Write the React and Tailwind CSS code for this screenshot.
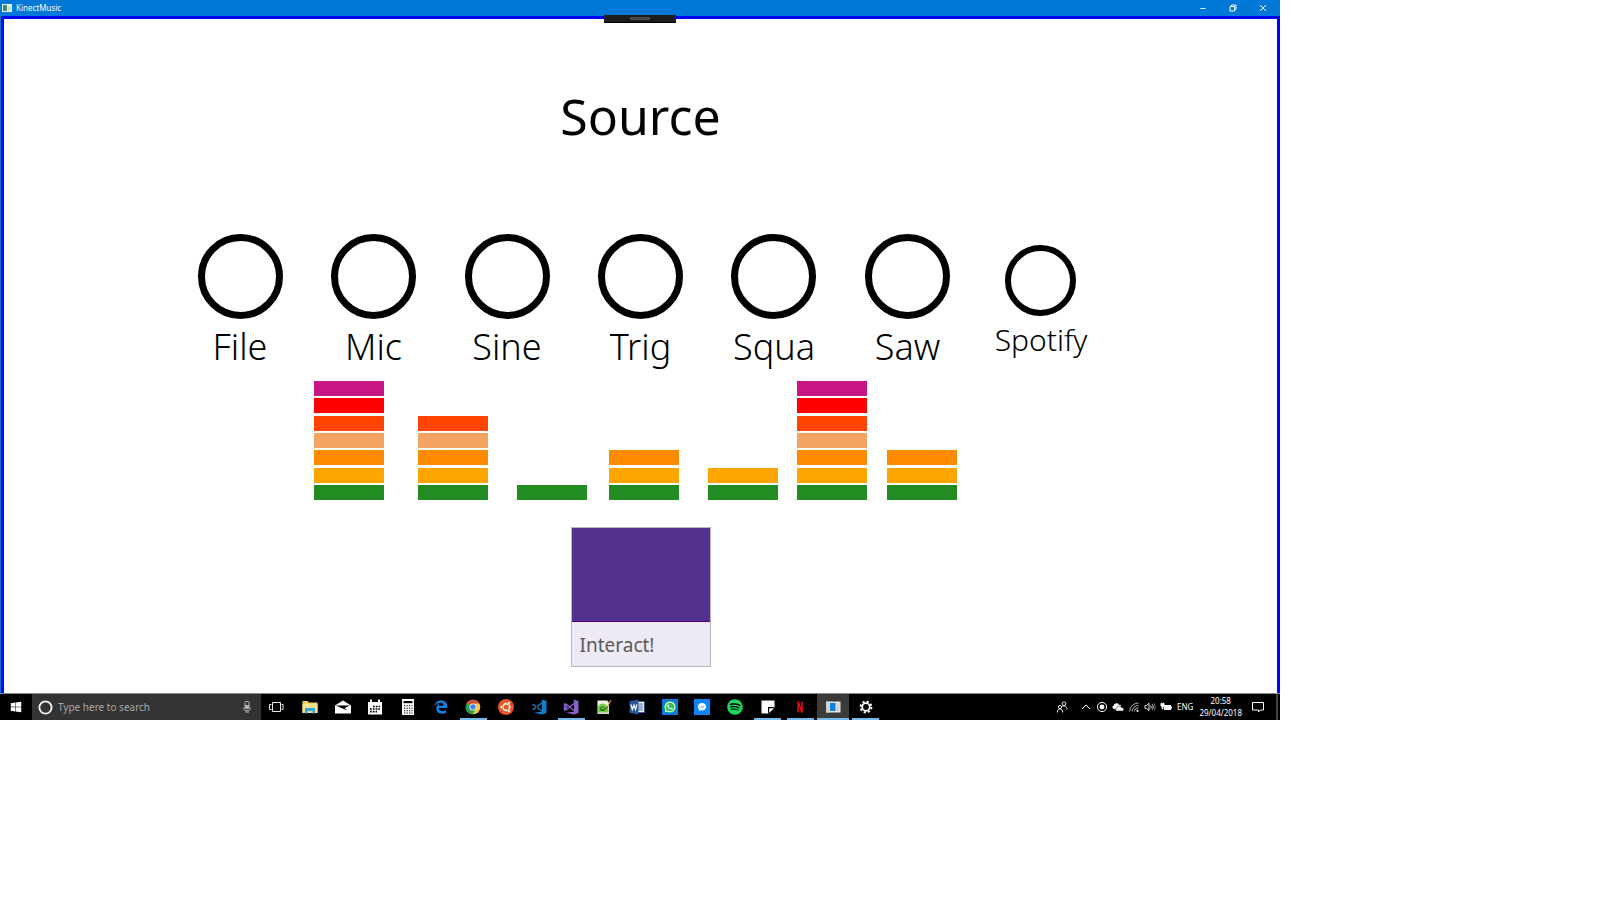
import React from "react";
import { FaWindows, FaEdgeLegacy, FaSpotify, FaWhatsapp } from "react-icons/fa6";

const SOURCES = ["File", "Mic", "Sine", "Trig", "Squa", "Saw"];

const LEVEL_COLORS = [
  "bg-[#c71585]",
  "bg-[#ff0000]",
  "bg-[#ff4500]",
  "bg-[#f4a460]",
  "bg-[#ff8c00]",
  "bg-[#ffa500]",
  "bg-[#228b22]",
];

const METERS = [
  { level: 7, gap: "" },
  { level: 5, gap: "ml-[34px]" },
  { level: 1, gap: "ml-[29px]" },
  { level: 3, gap: "ml-[22px]" },
  { level: 2, gap: "ml-[29px]" },
  { level: 7, gap: "ml-[19px]" },
  { level: 3, gap: "ml-[20px]" },
];

function Icon({ size = "size-4", children, box = "0 0 16 16" }) {
  return (
    <svg viewBox={box} className={`${size} shrink-0`} fill="none" aria-hidden="true">
      {children}
    </svg>
  );
}

const TaskViewIcon = () => (
  <Icon>
    <path d="M3.500 3.500h8v9h-8zM2.500 5.500h-2v5h2M12.500 5.500h1.500v5h-1.500" stroke="#e8e8e8" />
  </Icon>
);

const ExplorerIcon = () => (
  <Icon>
    <path d="M.5 2h5l1.500 1.500h8.500V14H.5z" fill="#f3cf63" />
    <path d="M.5 5h15v9H.5z" fill="#fbe08c" />
    <path d="M3 14.500V9h10v5.500h-2.500V12h-5v2.500z" fill="#2ca7e0" />
  </Icon>
);

const MailIcon = () => (
  <Icon>
    <path d="M0 6.500 8 1.500l8 5V14.500H0z" fill="#fff" />
    <path d="M1 6.500h14L9.500 9l3 2.500L7 9.200z" fill="#000" />
  </Icon>
);

const CalendarIcon = () => (
  <Icon>
    <path d="M1 3h2V.5h2V3h6V.5h2V3h2v12.500H1z" fill="#fff" />
    <path
      d="M6 7.500h7M3 10h10M3 12.700h7"
      stroke="#000"
      strokeWidth="1.700"
      strokeDasharray="1.800 1"
    />
  </Icon>
);

const CalculatorIcon = () => (
  <Icon>
    <path d="M2 0h12v16H2z" fill="#fff" />
    <path d="M3.500 2h9v2.200h-9z" fill="#000" />
    <path
      d="M4 6.800h8.500M4 9.300h8.500M4 11.700h8.500M4 14h8.500"
      stroke="#000"
      strokeWidth="1.100"
      strokeDasharray="1.300 1.200"
    />
  </Icon>
);

const ChromeIcon = () => (
  <Icon>
    <circle cx="8" cy="8" r="7.300" fill="#fcc934" />
    <path d="M8 8 1.700 4.300A7.300 7.300 0 0 1 14.300 4.400H8z" fill="#dd4b3e" />
    <path d="M1.700 4.300A7.300 7.300 0 0 0 7.600 15.300L11 9.800 8 8z" fill="#2a9d4e" />
    <circle cx="8" cy="8" r="3.600" fill="#fff" />
    <circle cx="8" cy="8" r="2.800" fill="#4285f4" />
  </Icon>
);

const UbuntuIcon = () => (
  <Icon>
    <circle cx="8" cy="8" r="8" fill="#e95420" />
    <circle cx="8.300" cy="8" r="3.400" stroke="#fff" strokeWidth="1.700" />
    <circle cx="3.600" cy="8" r="1.500" fill="#fff" stroke="#e95420" strokeWidth=".6" />
    <circle cx="10.800" cy="3.900" r="1.500" fill="#fff" stroke="#e95420" strokeWidth=".6" />
    <circle cx="10.800" cy="12.100" r="1.500" fill="#fff" stroke="#e95420" strokeWidth=".6" />
  </Icon>
);

const VsCodeIcon = () => (
  <Icon>
    <path d="M10.500.5 15.500 2v12l-5 1.500L3 13.500l8-.8V3.500z" fill="#0f7fcc" />
    <path d="m1 5.500 1.500-.8L11 11.500V13zM1 10.500l1.500.8L11 4.800V3z" fill="#0f7fcc" />
  </Icon>
);

const VisualStudioIcon = () => (
  <Icon>
    <path d="M10.500.5 15.500 2v12l-5 1.500L3 13.500l8-.8V3.500z" fill="#8a62c8" />
    <path
      d="M1.500 5.500v5l2.300-2.500zM1.500 5.500 3 5l8 6.500M1.500 10.500 3 11l8-6.500"
      stroke="#8a62c8"
      strokeWidth="1.400"
    />
  </Icon>
);

const NotepadIcon = () => (
  <Icon>
    <path d="M1.500 1.500h9.500l2 2v11.500H1.500z" fill="#eef2e6" />
    <path d="M2 7.500C4 3.500 9 3.500 11 7l1.500 3v3.500H2z" fill="#7ccb3f" />
    <path d="M3.500 10.500C4 6 9 6 10 10.500c-1.500 2-5 2-6.500 0z" fill="#2c7a1e" />
    <path d="M5 9.500c1-1.500 2.500-1.500 3.500 0z" fill="#c9efb0" />
    <path d="M2 14h10.500" stroke="#b5c7a6" />
    <path d="M15 1 11 8.500" stroke="#d6983b" strokeWidth="1.300" />
    <path d="m11.200 8-.7 1.800" stroke="#332211" />
  </Icon>
);

const WordIcon = () => (
  <Icon>
    <path d="M7.500 2.500h7.800v11H7.500z" fill="#fff" stroke="#2b579a" strokeWidth=".8" />
    <path d="M9 5h5M9 7h5M9 9h5M9 11h5" stroke="#2b579a" strokeWidth=".9" />
    <path d="M.5 2.200 9.500.6v14.800L.5 13.800z" fill="#2b579a" />
    <path d="m2 5.500 1.300 5L5 6l1.500 4.500L8 5.300" stroke="#fff" strokeWidth="1.200" />
  </Icon>
);

const WhatsAppIcon = () => (
  <span className="flex size-4 items-center justify-center bg-[#0a7bdc]">
    <span className="flex size-3 items-center justify-center rounded-full bg-[#2fc351]">
      <FaWhatsapp className="size-3 text-white" />
    </span>
  </span>
);

const MessengerIcon = () => (
  <Icon>
    <path d="M0 0h16v16H0z" fill="#0a84ff" />
    <path
      d="M8 4C5.600 4 3.900 5.600 3.900 7.700c0 1.100.5 2 1.300 2.700v1.700l1.500-.8c.4.100.8.100 1.300.100 2.400 0 4.100-1.600 4.100-3.700S10.400 4 8 4z"
      fill="#fff"
    />
    <path d="m5.700 8.800 1.700-1.700 1.300 1.100L10.400 7" stroke="#0a84ff" strokeWidth=".8" />
  </Icon>
);

const StickyNotesIcon = () => (
  <Icon>
    <path d="M1.500 1.500h13v7L9 14.500H1.500z" fill="#fff" />
    <path d="M8 14.500V8h6.500v1l-5 5.500z" fill="#000" />
    <path d="M9.200 14V9.200H14z" fill="#fff" />
  </Icon>
);

const NetflixIcon = () => (
  <Icon>
    <path d="M5 2.500h2V13.500H5zM9 2.500h2V13.500H9z" fill="#b20710" />
    <path d="M5 2.500h2l4 11H9z" fill="#e50914" />
  </Icon>
);

const AppWindowIcon = () => (
  <Icon>
    <path d="M1 2.500h14.500v11H1z" fill="#e6e6e6" />
    <path d="M1 2.500h3.500v11H1z" fill="#cfcfcf" />
    <path d="M5 4h5.500v8H5z" fill="#0f7fe0" />
    <path d="M11.500 5h3M11.500 7h3M11.500 9h3M11.500 11h3" stroke="#b5b5b5" strokeWidth=".8" />
  </Icon>
);

const SettingsIcon = () => (
  <Icon>
    <circle cx="8" cy="8" r="5.400" stroke="#fff" strokeWidth="2" strokeDasharray="2.120 2.120" />
    <circle cx="8" cy="8" r="3.800" stroke="#fff" strokeWidth="1.800" />
  </Icon>
);

const APPS = [
  { name: "Task View", icon: <TaskViewIcon /> },
  { name: "File Explorer", icon: <ExplorerIcon /> },
  { name: "Mail", icon: <MailIcon /> },
  { name: "Calendar", icon: <CalendarIcon /> },
  { name: "Calculator", icon: <CalculatorIcon /> },
  { name: "Microsoft Edge", icon: <FaEdgeLegacy className="size-[14px] text-[#0f7fe0]" /> },
  { name: "Google Chrome", icon: <ChromeIcon />, running: true },
  { name: "Ubuntu", icon: <UbuntuIcon /> },
  { name: "Visual Studio Code", icon: <VsCodeIcon /> },
  { name: "Visual Studio", icon: <VisualStudioIcon />, running: true },
  { name: "Notepad++", icon: <NotepadIcon /> },
  { name: "Word", icon: <WordIcon /> },
  { name: "WhatsApp", icon: <WhatsAppIcon /> },
  { name: "Messenger", icon: <MessengerIcon /> },
  { name: "Spotify", icon: <FaSpotify className="size-4 text-[#1ed760]" /> },
  { name: "Sticky Notes", icon: <StickyNotesIcon />, running: true },
  { name: "Netflix", icon: <NetflixIcon />, running: true },
  { name: "KinectMusic", icon: <AppWindowIcon />, running: true, active: true },
  { name: "Settings", icon: <SettingsIcon />, running: true },
];

const TRAY = [
  {
    name: "Show hidden icons",
    icon: <path d="m2 8 4-4 4 4" stroke="#fff" />,
  },
  {
    name: "Recorder",
    icon: (
      <>
        <circle cx="6" cy="6" r="4.600" stroke="#fff" />
        <circle cx="6" cy="6" r="2.400" fill="#fff" />
      </>
    ),
  },
  {
    name: "OneDrive",
    icon: (
      <>
        <path
          d="M1.800 8C0 7.500 0 5 1.600 4.800 1.800 2 5.800 1.300 6.800 3.800 8 3.500 9 4 9 5L4.500 8z"
          fill="#fff"
        />
        <path
          d="M4.800 10C3 9.600 3 7.200 4.900 7c.2-2.400 3.700-2.700 4.500-.6 2.600-.3 3.300 3 1.100 3.600z"
          fill="#fff"
          stroke="#000"
          strokeWidth=".5"
        />
      </>
    ),
  },
  {
    name: "Network",
    icon: (
      <>
        <path
          d="M1.500 10.500A9 9 0 0 1 10.500 2M4 10.500a6.500 6.500 0 0 1 6.500-6M6.200 10.500a4.300 4.300 0 0 1 4.300-3.700"
          stroke="#c8c8c8"
          strokeWidth=".9"
        />
        <circle cx="9.500" cy="9.800" r="1.100" fill="#fff" />
      </>
    ),
  },
  {
    name: "Volume",
    icon: (
      <>
        <path d="M1 4.500h1.500L5 2.300v7.400L2.500 7.500H1z" stroke="#fff" strokeWidth=".9" />
        <path
          d="M6.700 4.500c.7 1 .7 2 0 3M8.200 3.300c1.300 1.700 1.300 3.700 0 5.400"
          stroke="#fff"
          strokeWidth=".9"
        />
        <path d="M9.900 2.300c1.700 2.300 1.700 5.100 0 7.400" stroke="#888" strokeWidth=".9" />
      </>
    ),
  },
  {
    name: "Battery",
    icon: (
      <>
        <path d="M4 4h7v5H4z" fill="#fff" />
        <path d="M11 5.500h1v2h-1z" fill="#fff" />
        <path
          d="M.8 2.500h3.400v2c0 .8-.6 1.300-1.200 1.300V8H2V5.800C1.400 5.800.8 5.300.8 4.500zM1.600 1.500v1.500M3.400 1.500v1.500"
          fill="#fff"
          stroke="#fff"
          strokeWidth=".6"
        />
      </>
    ),
  },
];

function TitleBar() {
  return (
    <header className="flex h-4 items-center bg-[#0078d7] pl-[2px] text-white">
      <svg viewBox="0 0 10 8" className="h-2 w-[10px]" aria-hidden="true">
        <path d="M0 0h10v8H0z" fill="#e9efe9" />
        <path d="M1 1h4v6H1z" fill="#3f8f86" />
        <path d="M6 2h1v5H6zM8 1h1v6H8z" fill="#b8d4c4" />
      </svg>
      <span className="ml-1 flex-1 text-[8px] leading-4">KinectMusic</span>
      <button aria-label="Minimize" className="flex h-4 w-[30px] items-center justify-center">
        <Icon size="size-2" box="0 0 8 8">
          <path d="M1.500 4.500h5" stroke="#fff" />
        </Icon>
      </button>
      <button aria-label="Restore" className="flex h-4 w-[30px] items-center justify-center">
        <Icon size="size-2" box="0 0 8 8">
          <path d="M1 2.500h4.500V7H1zM2.500 2.500V1H7v4.500H5.500" stroke="#fff" />
        </Icon>
      </button>
      <button aria-label="Close" className="mr-[2px] flex h-4 w-[30px] items-center justify-center">
        <Icon size="size-2" box="0 0 8 8">
          <path d="m1 1 6 6M7 1 1 7" stroke="#fff" />
        </Icon>
      </button>
    </header>
  );
}

function SourcePicker() {
  return (
    <div className="mx-auto grid w-[73.4%] grid-cols-7">
      {SOURCES.map((name) => (
        <button key={name} className="flex flex-col items-center">
          <span className="size-[85px] rounded-full border-[7px] border-black" />
          <span className="mt-1 text-[36px] leading-[48px] font-light">{name}</span>
        </button>
      ))}
      <button className="flex flex-col items-center pt-[11px]">
        <span className="size-[71px] rounded-full border-[6px] border-black" />
        <span className="mt-1 text-[30px] leading-[40px] font-light">Spotify</span>
      </button>
    </div>
  );
}

function Meters() {
  return (
    <div className="mr-[11px] flex justify-center">
      {METERS.map(({ level, gap }, i) => (
        <div key={i} className={`flex h-[119px] w-[70px] flex-col justify-between ${gap}`}>
          {LEVEL_COLORS.map((color, row) => (
            <div key={color} className={`h-[15px] ${row >= 7 - level ? color : ""}`} />
          ))}
        </div>
      ))}
    </div>
  );
}

function Taskbar() {
  return (
    <footer className="flex h-[27px] items-stretch border-t border-[#8a8a8a] bg-black text-white">
      <button aria-label="Start" className="flex w-8 items-center justify-center">
        <FaWindows className="size-3" />
      </button>
      <label className="flex w-[17.9%] items-center bg-[#333333] pr-[10px] pl-[6px]">
        <svg viewBox="0 0 16 16" className="size-[15px] shrink-0" aria-hidden="true">
          <circle cx="8" cy="8" r="6.500" fill="none" stroke="#f2f2f2" strokeWidth="2" />
        </svg>
        <input
          type="text"
          aria-label="Search"
          placeholder="Type here to search"
          className="ml-[5px] min-w-0 flex-1 bg-transparent text-[10px] leading-4 outline-none placeholder:text-[#a8a8a8]"
        />
        <svg viewBox="0 0 8 12" className="h-3 w-2 shrink-0" fill="none" aria-hidden="true">
          <rect x="2" y=".5" width="4" height="7" rx="1" stroke="#b5b5b5" />
          <path d="M2 4h4v3.500H2z" fill="#b5b5b5" />
          <path d="M.8 6.500v1.500c0 2.300 6.400 2.300 6.400 0V6.500M2 11h4" stroke="#b5b5b5" />
        </svg>
      </label>
      <nav aria-label="Applications" className="flex w-[48.5%]">
        {APPS.map(({ name, icon, running, active }) => (
          <button
            key={name}
            aria-label={name}
            className={`flex flex-1 flex-col items-center ${active ? "bg-[#3a3a3a]" : ""}`}
          >
            <span className="flex flex-1 items-center">{icon}</span>
            <span
              className={`-mt-[2px] h-[2px] ${active ? "w-full" : "w-[27px]"} ${running ? "bg-[#76b9ed]" : ""}`}
            />
          </button>
        ))}
      </nav>
      <div className="flex flex-1 items-center justify-end">
        <button aria-label="People" className="mr-2 flex w-4 justify-center">
          <Icon size="size-3" box="0 0 12 12">
            <circle cx="8" cy="2.800" r="1.800" stroke="#fff" strokeWidth=".9" />
            <circle cx="4" cy="6" r="1.600" stroke="#fff" strokeWidth=".9" />
            <path
              d="M1.300 11.500c0-4.800 5.400-4.800 5.400 0M6.500 5.500C8.500 4.300 11 5.500 11 8.500"
              stroke="#fff"
              strokeWidth=".9"
            />
          </Icon>
        </button>
        {TRAY.map(({ name, icon }) => (
          <button key={name} aria-label={name} className="flex w-4 justify-center">
            <Icon size="size-3" box="0 0 12 12">
              {icon}
            </Icon>
          </button>
        ))}
        <button className="ml-[3px] text-[8px] leading-4">ENG</button>
        <button className="ml-[6px] flex flex-col items-center text-[8px] leading-3">
          <span>20:58</span>
          <span>29/04/2018</span>
        </button>
        <button aria-label="Notifications" className="mr-3 ml-[10px] flex">
          <Icon size="size-3" box="0 0 12 12">
            <path d="M.5 1.500h11v7.500H8.500L6.500 11V9h-6z" stroke="#fff" />
          </Icon>
        </button>
        <button aria-label="Show desktop" className="h-full w-1 border-l-2 border-[#444]" />
      </div>
    </footer>
  );
}

export default function App() {
  return (
    <div className="min-h-screen bg-white">
      <div className="w-4/5 min-w-[960px] font-['Noto_Sans','Open_Sans',sans-serif] text-black">
        <TitleBar />
        <div className="bg-[#0078d7] pl-px">
          <main className="relative border-t-[3px] border-r-[3px] border-l-[3px] border-[#0000ff] bg-white pb-[26px]">
            <div className="absolute inset-x-0 -top-1 mr-[2px] flex justify-center">
              <div className="flex h-2 w-[72px] justify-center border-b border-black bg-[#1c1c1c] pt-[2px]">
                <span className="h-[3px] w-5 bg-[#484848]" />
              </div>
            </div>
            <h1 className="pt-[62px] text-center text-[50px] leading-[70px]">Source</h1>
            <div className="mt-[83px]">
              <SourcePicker />
            </div>
            <div className="mt-[10px]">
              <Meters />
            </div>
            <div className="mt-[27px] flex justify-center">
              <button className="flex size-[140px] flex-col border border-[#b9b5c4] bg-[#eeeaf5] text-left text-[#5a5a5a]">
                <span className="h-[94px] w-full border-b border-[#4b0082] bg-[#52318f]" />
                <span className="px-2 pt-[9px] text-[19px] leading-7">Interact!</span>
              </button>
            </div>
          </main>
        </div>
        <Taskbar />
      </div>
    </div>
  );
}
